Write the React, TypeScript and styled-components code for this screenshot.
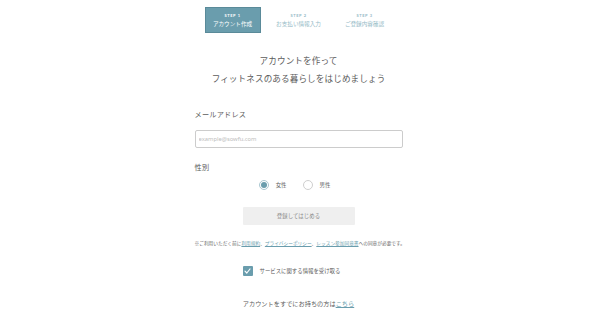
import React from 'react';
import styled, { createGlobalStyle } from 'styled-components';

const GlobalStyle = createGlobalStyle`
  html, body {
    margin: 0;
    padding: 0;
    background: #ffffff;
  }
  body {
    font-family: 'Noto Sans CJK JP', 'Noto Sans', sans-serif;
    color: #5c5c5c;
  }
`;

const TEAL = '#6a9dad';

const Page = styled.div`
  width: 600px;
  height: 323px;
  padding-right: 3px;
  box-sizing: border-box;
  display: flex;
  flex-direction: column;
  align-items: center;
  overflow: hidden;
`;

const Steps = styled.ol`
  list-style: none;
  margin: 7px 0 0;
  padding: 0;
  display: flex;
  gap: 10px;
`;

const Step = styled.li<{ $active?: boolean }>`
  width: 56px;
  height: 26px;
  box-sizing: border-box;
  display: flex;
  flex-direction: column;
  align-items: center;
  justify-content: center;
  gap: 1px;
  background: ${(p) => (p.$active ? TEAL : 'transparent')};
  border: 1px solid ${(p) => (p.$active ? '#5a8a99' : 'transparent')};
  color: ${(p) => (p.$active ? '#ffffff' : '#95bac6')};
`;

const StepNo = styled.span`
  font-family: 'Lato', 'Noto Sans', sans-serif;
  font-size: 4px;
  font-weight: 700;
  letter-spacing: 0.6px;
  line-height: 6px;
`;

const StepName = styled.span`
  font-size: 5.6px;
  line-height: 8px;
  white-space: nowrap;
`;

const Heading = styled.h1`
  margin: 18px 0 0;
  font-size: 8.6px;
  font-weight: 400;
  line-height: 18px;
  letter-spacing: 0.1px;
  text-align: center;
  color: #5c5c5c;
`;

const Form = styled.form`
  width: 208px;
  display: flex;
  flex-direction: column;
`;

const Label = styled.div<{ $top: number }>`
  margin-top: ${(p) => p.$top}px;
  font-size: 7.2px;
  line-height: 10px;
  letter-spacing: 0.2px;
  color: #5c5c5c;
`;

const Input = styled.input`
  margin-top: 11.5px;
  height: 18px;
  box-sizing: border-box;
  border: 1px solid #cccccc;
  border-radius: 2px;
  padding: 0 3px;
  font-family: 'Noto Sans', sans-serif;
  font-size: 5.8px;
  color: #555555;
  outline: none;
  &::placeholder {
    color: #bdbdbd;
  }
`;

const RadioRow = styled.div`
  margin-top: 8.5px;
  display: flex;
  justify-content: center;
  padding-right: 8px;
  gap: 16px;
`;

const RadioItem = styled.label`
  display: flex;
  align-items: center;
  gap: 7px;
  height: 10px;
  font-size: 5.4px;
  color: #5c5c5c;
`;

const RadioCircle = styled.span<{ $checked?: boolean }>`
  width: 10px;
  height: 10px;
  box-sizing: border-box;
  border-radius: 50%;
  border: 1px solid ${(p) => (p.$checked ? '#a9c7d1' : '#cfcfcf')};
  background: #ffffff;
  display: flex;
  align-items: center;
  justify-content: center;
  &::after {
    content: '';
    width: 6px;
    height: 6px;
    border-radius: 50%;
    background: ${(p) => (p.$checked ? TEAL : 'transparent')};
  }
`;

const SubmitButton = styled.button`
  align-self: center;
  margin-top: 17px;
  width: 112px;
  height: 18px;
  border: none;
  border-radius: 1px;
  background: #efefef;
  color: #8a8a8a;
  font-family: 'Noto Sans CJK JP', sans-serif;
  font-size: 5.4px;
  letter-spacing: 0.1px;
  padding: 0;
`;

const Note = styled.p`
  margin: 14px 0 0;
  font-size: 4.7px;
  line-height: 8px;
  text-align: center;
  white-space: nowrap;
  color: #6a6a6a;
`;

const TextLink = styled.a`
  color: ${TEAL};
  text-decoration: underline;
  text-underline-offset: 1px;
`;

const CheckRow = styled.label`
  align-self: center;
  width: 112px;
  margin-top: 19px;
  display: flex;
  align-items: center;
  gap: 7px;
  font-size: 5.4px;
  color: #5c5c5c;
`;

const CheckBox = styled.span`
  width: 10px;
  height: 10px;
  border-radius: 1px;
  background: ${TEAL};
  display: flex;
  align-items: center;
  justify-content: center;
`;

const Footer = styled.p`
  margin: 23px 0 0;
  font-size: 6.2px;
  line-height: 10px;
  text-align: center;
  color: #5c5c5c;
`;

const steps = [
  { no: 'STEP 1', name: 'アカウント作成' },
  { no: 'STEP 2', name: 'お支払い情報入力' },
  { no: 'STEP 3', name: 'ご登録内容確認' },
];

const App = () => {
  return (
    <>
      <GlobalStyle />
      <Page>
        <Steps>
          {steps.map((s, i) => (
            <Step key={s.no} $active={i === 0}>
              <StepNo>{s.no}</StepNo>
              <StepName>{s.name}</StepName>
            </Step>
          ))}
        </Steps>

        <Heading>
          アカウントを作って
          <br />
          フィットネスのある暮らしをはじめましょう
        </Heading>

        <Form onSubmit={(e) => e.preventDefault()}>
          <Label $top={21.5}>メールアドレス</Label>
          <Input type="email" placeholder="example@sowfu.com" />

          <Label $top={13.5}>性別</Label>
          <RadioRow>
            <RadioItem>
              <RadioCircle $checked />
              女性
            </RadioItem>
            <RadioItem>
              <RadioCircle />
              男性
            </RadioItem>
          </RadioRow>

          <SubmitButton type="submit">登録してはじめる</SubmitButton>

          <Note>
            ※ご利用いただく前に<TextLink href="#">利用規約</TextLink>、
            <TextLink href="#">プライバシーポリシー</TextLink>、
            <TextLink href="#">レッスン参加同意書</TextLink>への同意が必要です。
          </Note>

          <CheckRow>
            <CheckBox>
              <svg width="7" height="6" viewBox="0 0 7 6">
                <path
                  d="M1 3.2 L2.8 5 L6 1"
                  fill="none"
                  stroke="#ffffff"
                  strokeWidth="1.2"
                  strokeLinecap="round"
                  strokeLinejoin="round"
                />
              </svg>
            </CheckBox>
            サービスに関する情報を受け取る
          </CheckRow>
        </Form>

        <Footer>
          アカウントをすでにお持ちの方は<TextLink href="#">こちら</TextLink>
        </Footer>
      </Page>
    </>
  );
};

export default App;
